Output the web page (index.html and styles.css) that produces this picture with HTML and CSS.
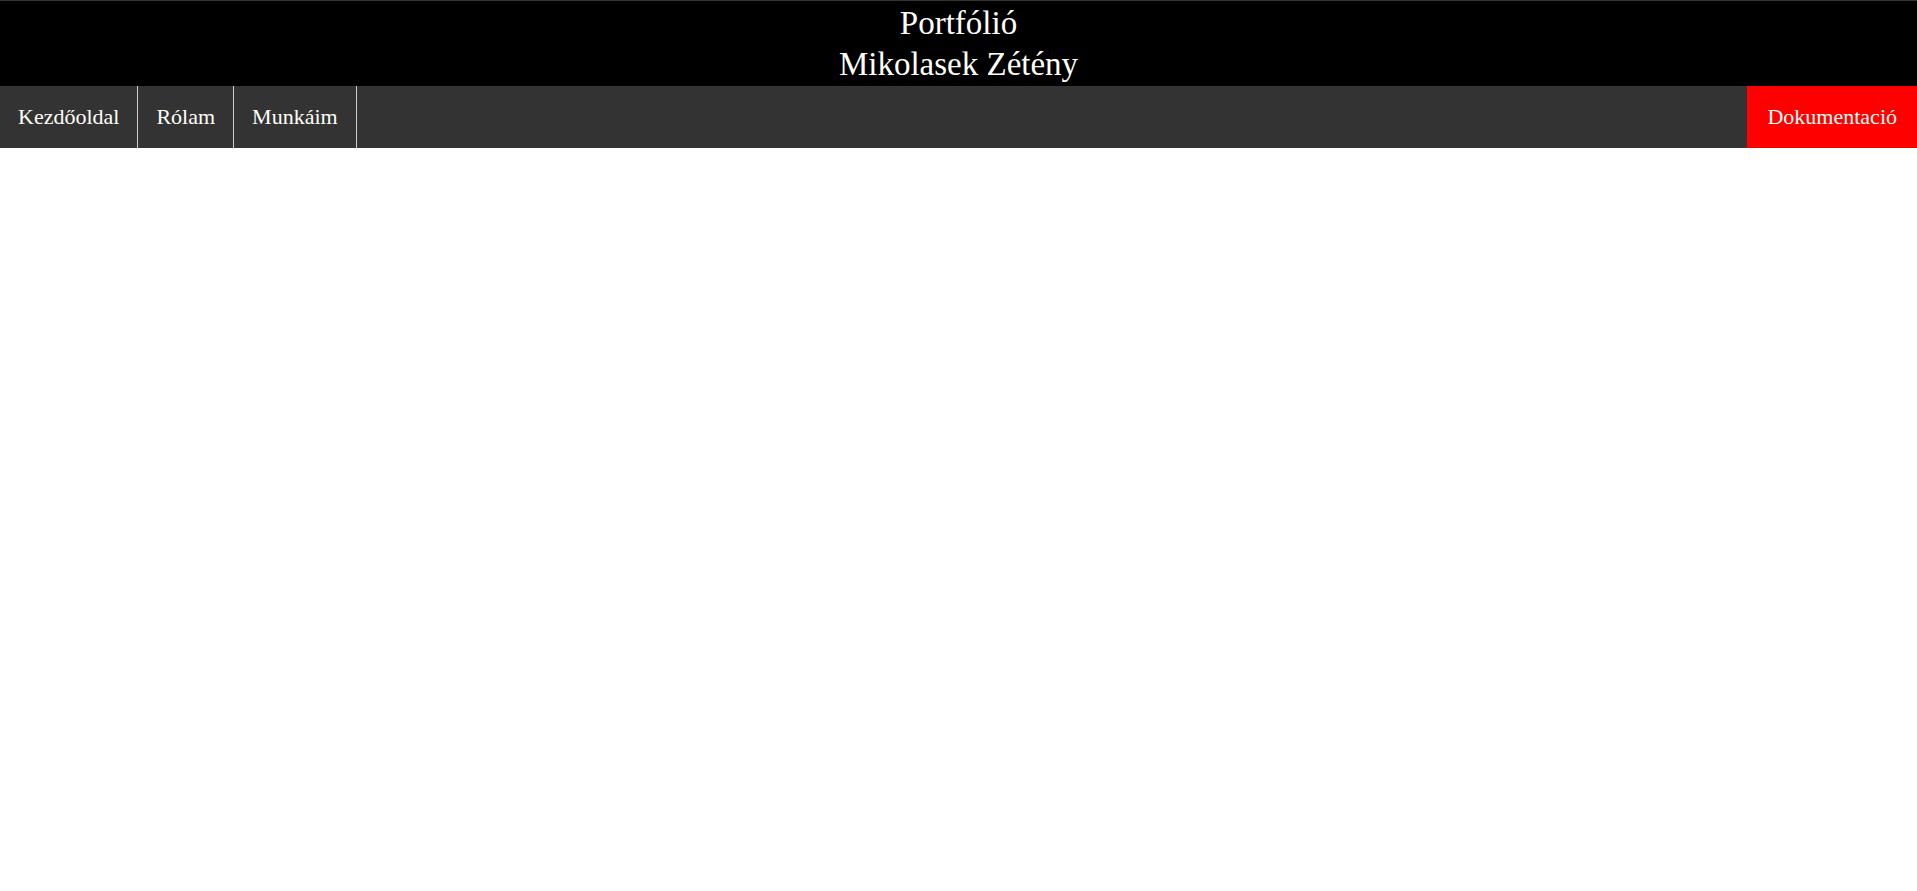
FILE: index.html
```html
<!DOCTYPE html>
<html lang="hu">
<head>
<meta charset="utf-8">
<title>Portfólió</title>
<link rel="stylesheet" href="styles.css">
</head>
<body>
<header class="site-header">
  <h1 class="title">Portfólió<br>Mikolasek Zétény</h1>
</header>
<nav class="nav">
  <a class="nav-item" href="#">Kezdőoldal</a>
  <a class="nav-item" href="#">Rólam</a>
  <a class="nav-item" href="#">Munkáim</a>
  <a class="nav-item nav-doc" href="#">Dokumentació</a>
</nav>
</body>
</html>
```
FILE: styles.css
```css
html, body {
  margin: 0;
  padding: 0;
  background: #fff;
}
body {
  font-family: "Liberation Serif", "DejaVu Serif", serif;
  color: #fff;
}
.site-header {
  background: #000;
  border-top: 1px solid #333;
  height: 86px;
  box-sizing: border-box;
  padding-top: 2px;
}
.title {
  margin: 0;
  text-align: center;
  font-weight: normal;
  font-size: 33px;
  line-height: 41px;
  color: #fffff8;
}
.nav {
  display: flex;
  background: #333;
  height: 62px;
}
.nav-item {
  display: block;
  padding: 0 18px;
  line-height: 62px;
  font-size: 22px;
  color: #fffff8;
  text-decoration: none;
  border-right: 1px solid #ccc;
}
.nav-doc {
  margin-left: auto;
  border-right: none;
  background: #f00;
  padding: 0 20px;
}
```
